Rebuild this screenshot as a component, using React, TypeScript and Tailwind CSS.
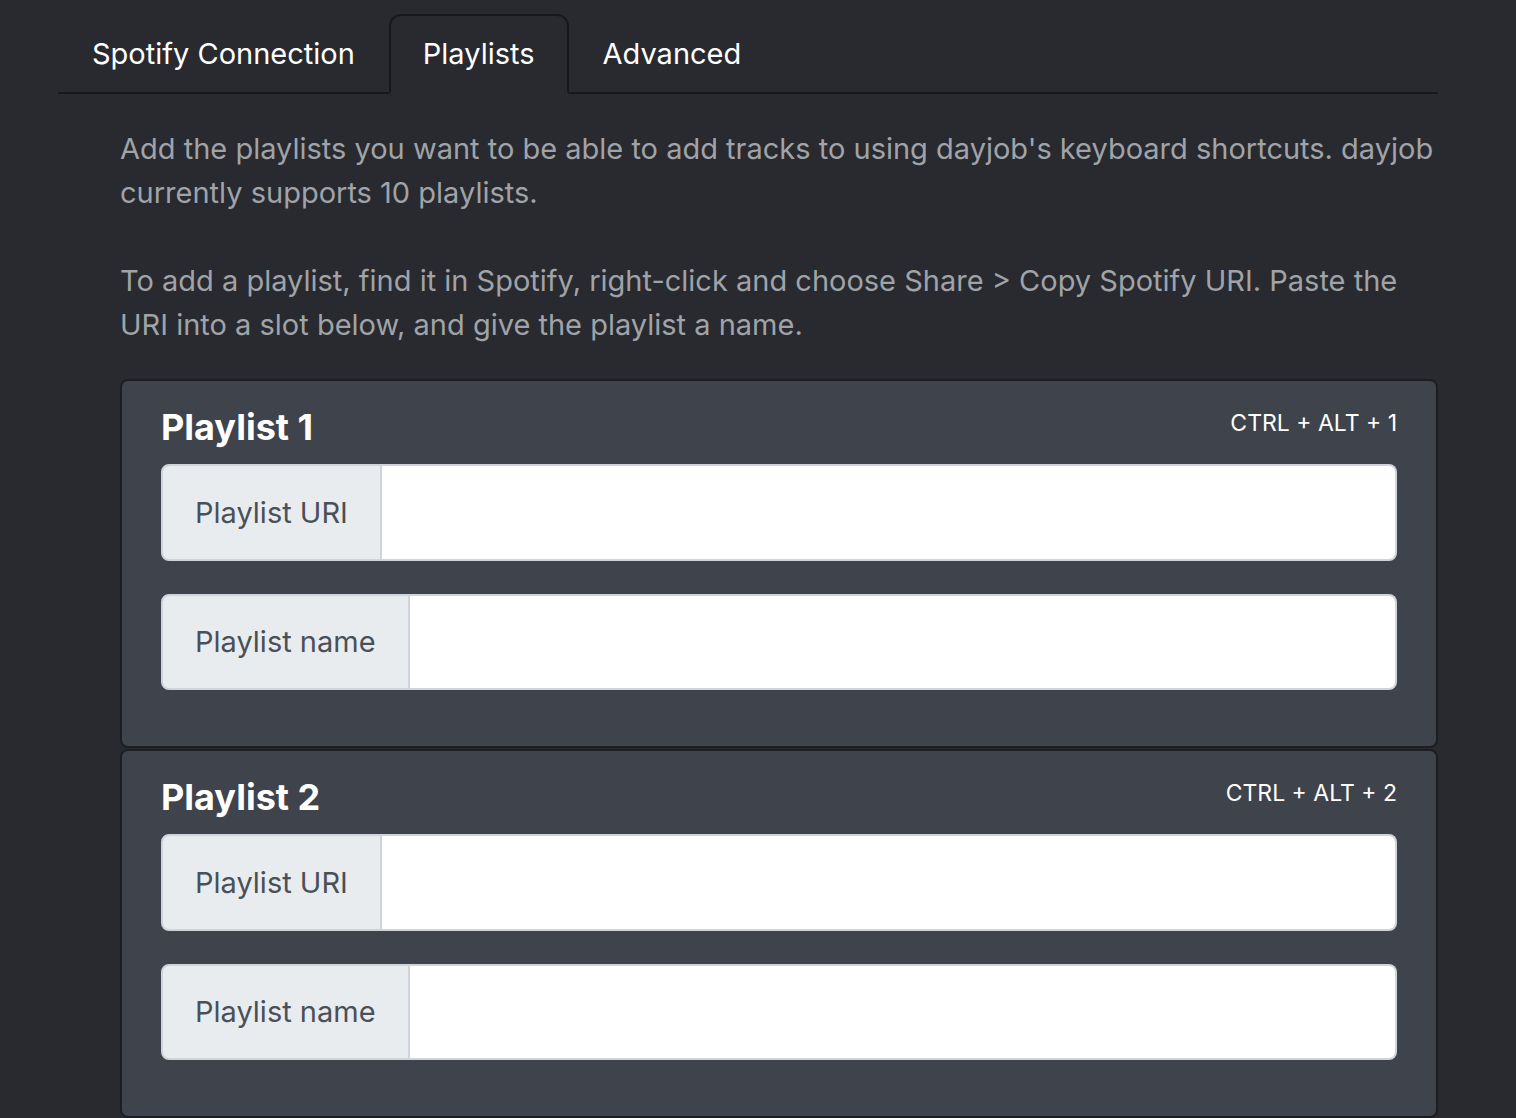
import { useState } from "react";

const tabs = ["Spotify Connection", "Playlists", "Advanced"];

function PlaylistCard({ index }: { index: number }) {
  const [uri, setUri] = useState("");
  const [name, setName] = useState("");

  return (
    <div className="rounded-[8px] border-2 border-[#1c1e21] bg-[#3f434b] px-[39px] pt-[24px] pb-[56px]">
      <div className="flex items-start justify-between mb-[15px]">
        <h2 className="text-[36px] leading-[44px] font-bold text-white">
          Playlist {index}
        </h2>
        <span className="text-[23px] leading-[36px] text-white">
          CTRL + ALT + {index}
        </span>
      </div>

      <div className="flex h-[97px] mb-[33px]">
        <span className="flex items-center px-[32px] bg-[#e9ecef] text-[#495057] text-[29px] border-2 border-[#ced4da] rounded-l-[8px]">
          Playlist URI
        </span>
        <input
          value={uri}
          onChange={(e) => setUri(e.target.value)}
          className="flex-1 min-w-0 bg-white border-2 border-l-0 border-[#ced4da] rounded-r-[8px] px-[24px] text-[29px] text-[#495057] outline-none"
        />
      </div>

      <div className="flex h-[96px]">
        <span className="flex items-center px-[32px] bg-[#e9ecef] text-[#495057] text-[29px] border-2 border-[#ced4da] rounded-l-[8px]">
          Playlist name
        </span>
        <input
          value={name}
          onChange={(e) => setName(e.target.value)}
          className="flex-1 min-w-0 bg-white border-2 border-l-0 border-[#ced4da] rounded-r-[8px] px-[24px] text-[29px] text-[#495057] outline-none"
        />
      </div>
    </div>
  );
}

export default function App() {
  const [active, setActive] = useState("Playlists");

  return (
    <div
      className="h-screen bg-[#282a2f] pt-[14px] overflow-hidden"
      style={{ fontFamily: "Inter, 'Noto Sans', sans-serif" }}
    >
      <div className="ml-[58px] w-[1380px]">
        {/* Tabs */}
        <nav className="flex border-b-2 border-[#16181b]">
          {tabs.map((t) => (
            <button
              key={t}
              onClick={() => setActive(t)}
              className={`-mb-[2px] h-[80px] px-[32px] text-[29px] leading-[44px] text-white rounded-t-[12px] border-2 ${
                active === t
                  ? "border-[#16181b] border-b-[#282a2f] bg-[#282a2f]"
                  : "border-transparent"
              }`}
            >
              {t}
            </button>
          ))}
        </nav>

        {/* Tab content */}
        <div className="pl-[62px] pt-[33px]">
          <p className="text-[29px] leading-[44px] text-[#a0a3a8] mb-[44px]">
            Add the playlists you want to be able to add tracks to using dayjob's keyboard
            shortcuts. dayjob currently supports 10 playlists.
          </p>
          <p className="text-[29px] leading-[44px] text-[#a0a3a8] mb-[32px]">
            To add a playlist, find it in Spotify, right-click and choose Share &gt; Copy
            Spotify URI. Paste the URI into a slot below, and give the playlist a name.
          </p>

          <div className="flex flex-col gap-px">
            {[1, 2].map((i) => (
              <PlaylistCard key={i} index={i} />
            ))}
          </div>
        </div>
      </div>
    </div>
  );
}
